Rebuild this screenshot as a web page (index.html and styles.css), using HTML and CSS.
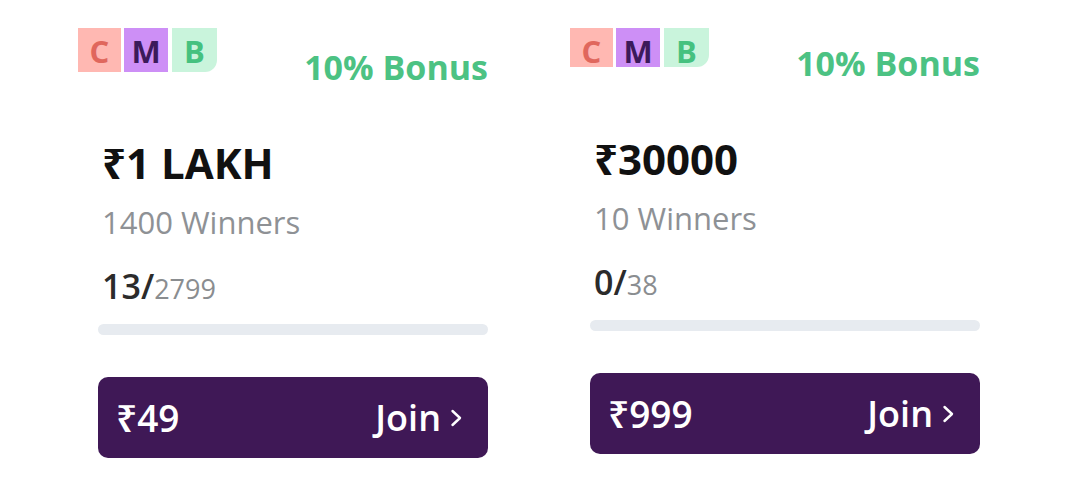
FILE: index.html
```html
<!DOCTYPE html>
<html lang="en">
<head>
<meta charset="utf-8">
<title>Contests</title>
<link rel="stylesheet" href="styles.css">
</head>
<body>
<div class="stage">
  <div class="card">
    <div class="card-head">
      <div class="tags">
        <span class="tag tag-c">C</span>
        <span class="tag tag-m">M</span>
        <span class="tag tag-b">B</span>
      </div>
      <div class="bonus">10% Bonus</div>
    </div>
    <div class="card-body">
      <div class="prize">₹1 LAKH</div>
      <div class="winners">1400 Winners</div>
      <div class="count"><span class="count-done">13/</span><span class="count-total">2799</span></div>
    </div>
    <div class="bar"><div class="bar-fill" style="width:0%"></div></div>
    <button class="join">
      <span class="fee">₹49</span>
      <span class="join-label">Join<svg class="chev" viewBox="0 0 13 18" width="13" height="18"><path d="M2.5 2 L10 9 L2.5 16" fill="none" stroke="#fff" stroke-width="2.4" stroke-linecap="round" stroke-linejoin="round"/></svg></span>
    </button>
  </div>
  <div class="card card-raised">
    <div class="card-head">
      <div class="tags">
        <span class="tag tag-c">C</span>
        <span class="tag tag-m">M</span>
        <span class="tag tag-b">B</span>
      </div>
      <div class="bonus">10% Bonus</div>
    </div>
    <div class="card-body">
      <div class="prize">₹30000</div>
      <div class="winners">10 Winners</div>
      <div class="count"><span class="count-done">0/</span><span class="count-total">38</span></div>
    </div>
    <div class="bar"><div class="bar-fill" style="width:0%"></div></div>
    <button class="join">
      <span class="fee">₹999</span>
      <span class="join-label">Join<svg class="chev" viewBox="0 0 13 18" width="13" height="18"><path d="M2.5 2 L10 9 L2.5 16" fill="none" stroke="#fff" stroke-width="2.4" stroke-linecap="round" stroke-linejoin="round"/></svg></span>
    </button>
  </div>
</div>
</body>
</html>
```
FILE: styles.css
```css
html, body {
  margin: 0;
  padding: 0;
  background: #ffffff;
}
body {
  font-family: "Open Sans", "Noto Sans", sans-serif;
  color: #1a1a1a;
}
.stage {
  margin-top: 28px;
  padding-left: 78px;
  display: flex;
  align-items: flex-start;
  gap: 62px;
}
.card {
  width: 430px;
  box-sizing: border-box;
  padding: 0 20px 0 0;
  background: #fff;
  display: flex;
  flex-direction: column;
}
.card-head {
  display: flex;
  justify-content: space-between;
  align-items: flex-start;
}
.tags {
  display: flex;
  gap: 3px;
}
.tag {
  width: 43px;
  height: 44px;
  box-sizing: border-box;
  padding-top: 8px;
  display: flex;
  align-items: flex-start;
  justify-content: center;
  font-weight: 700;
  font-size: 31px;
  line-height: 31px;
}
.card-raised .tag {
  height: 39px;
}
.tag-c { background: #ffb8b2; color: #e0675d; }
.tag-m { background: #cd8ff6; color: #3c1a5b; width: 44px; }
.tag-b { background: #c9f4dc; color: #45c17f; width: 45px; border-radius: 0 0 12px 0; margin-left: 1px; }
.bonus {
  margin-top: 19px;
  font-size: 34px;
  font-weight: 700;
  color: #4cc283;
  line-height: 41px;
}
.card-raised .bonus {
  margin-top: 15px;
}
.card-body {
  padding: 50px 0 0 24px;
  display: flex;
  flex-direction: column;
}
.prize {
  font-size: 42px;
  font-weight: 700;
  color: #111;
  line-height: 50px;
}
.winners {
  margin-top: 14px;
  font-size: 31px;
  color: #8e9195;
  line-height: 40px;
}
.count {
  margin-top: 24px;
  line-height: 40px;
}
.count-done {
  font-size: 34px;
  font-weight: 600;
  color: #2b2b2b;
}
.count-total {
  font-size: 27px;
  color: #8a8d90;
}
.bar {
  margin: 11px 0 0 20px;
  height: 11px;
  border-radius: 6px;
  background: #e7ebf0;
  overflow: hidden;
}
.bar-fill {
  height: 100%;
  background: #4cc283;
}
.join {
  margin: 42px 0 0 20px;
  height: 81px;
  border: 0;
  border-radius: 10px;
  background: #3f1856;
  color: #fff;
  font-family: inherit;
  display: flex;
  align-items: center;
  justify-content: space-between;
  padding: 0 25px 0 18px;
}
.fee {
  font-size: 37px;
  font-weight: 600;
}
.join-label {
  font-size: 36px;
  font-weight: 600;
  display: flex;
  align-items: center;
  gap: 9px;
}
.chev {
  width: 13px;
  height: 18px;
}
```
